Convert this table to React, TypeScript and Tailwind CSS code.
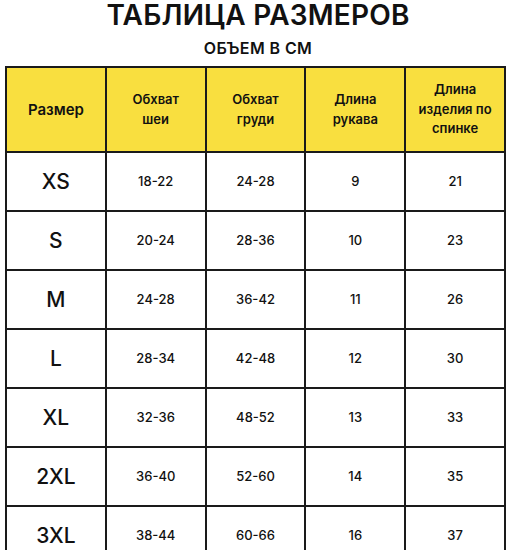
const headers = [
  ['Размер'],
  ['Обхват', 'шеи'],
  ['Обхват', 'груди'],
  ['Длина', 'рукава'],
  ['Длина', 'изделия по', 'спинке'],
];

const rows = [
  ['XS', '18-22', '24-28', '9', '21'],
  ['S', '20-24', '28-36', '10', '23'],
  ['M', '24-28', '36-42', '11', '26'],
  ['L', '28-34', '42-48', '12', '30'],
  ['XL', '32-36', '48-52', '13', '33'],
  ['2XL', '36-40', '52-60', '14', '35'],
  ['3XL', '38-44', '60-66', '16', '37'],
];

export default function App() {
  return (
    <div className="w-[516px] h-[550px] overflow-hidden bg-white text-[#111] font-['Inter','Noto_Sans',sans-serif]">
      <h1 className="pt-px text-center text-[28px] leading-none font-semibold tracking-[0.2px]">
        ТАБЛИЦА РАЗМЕРОВ
      </h1>
      <p className="mt-[11px] text-center text-[16px] leading-none font-semibold tracking-[0.4px]">ОБЪЕМ В СМ</p>
      <div className="mt-[10px] ml-[5px] w-[501px] grid grid-cols-5 border-l-2 border-t-2 border-[#1a1a1a]">
        {headers.map((h, i) => (
          <div
            key={i}
            className="h-[85px] bg-[#f9df3f] border-r-2 border-b-2 border-[#1a1a1a] flex flex-col items-center justify-center text-center"
          >
            {h.map((line) => (
              <span
                key={line}
                className={i === 0 ? 'text-[15px] font-semibold leading-[19px]' : 'text-[13px] font-semibold leading-[19.5px]'}
              >
                {line}
              </span>
            ))}
          </div>
        ))}
        {rows.map((r) =>
          r.map((c, j) => (
            <div
              key={r[0] + j}
              className="h-[59px] border-r-2 border-b-2 border-[#1a1a1a] flex items-center justify-center"
            >
              <span className={j === 0 ? 'text-[21px] font-medium' : 'text-[13px] font-medium'}>{c}</span>
            </div>
          ))
        )}
      </div>
    </div>
  );
}
